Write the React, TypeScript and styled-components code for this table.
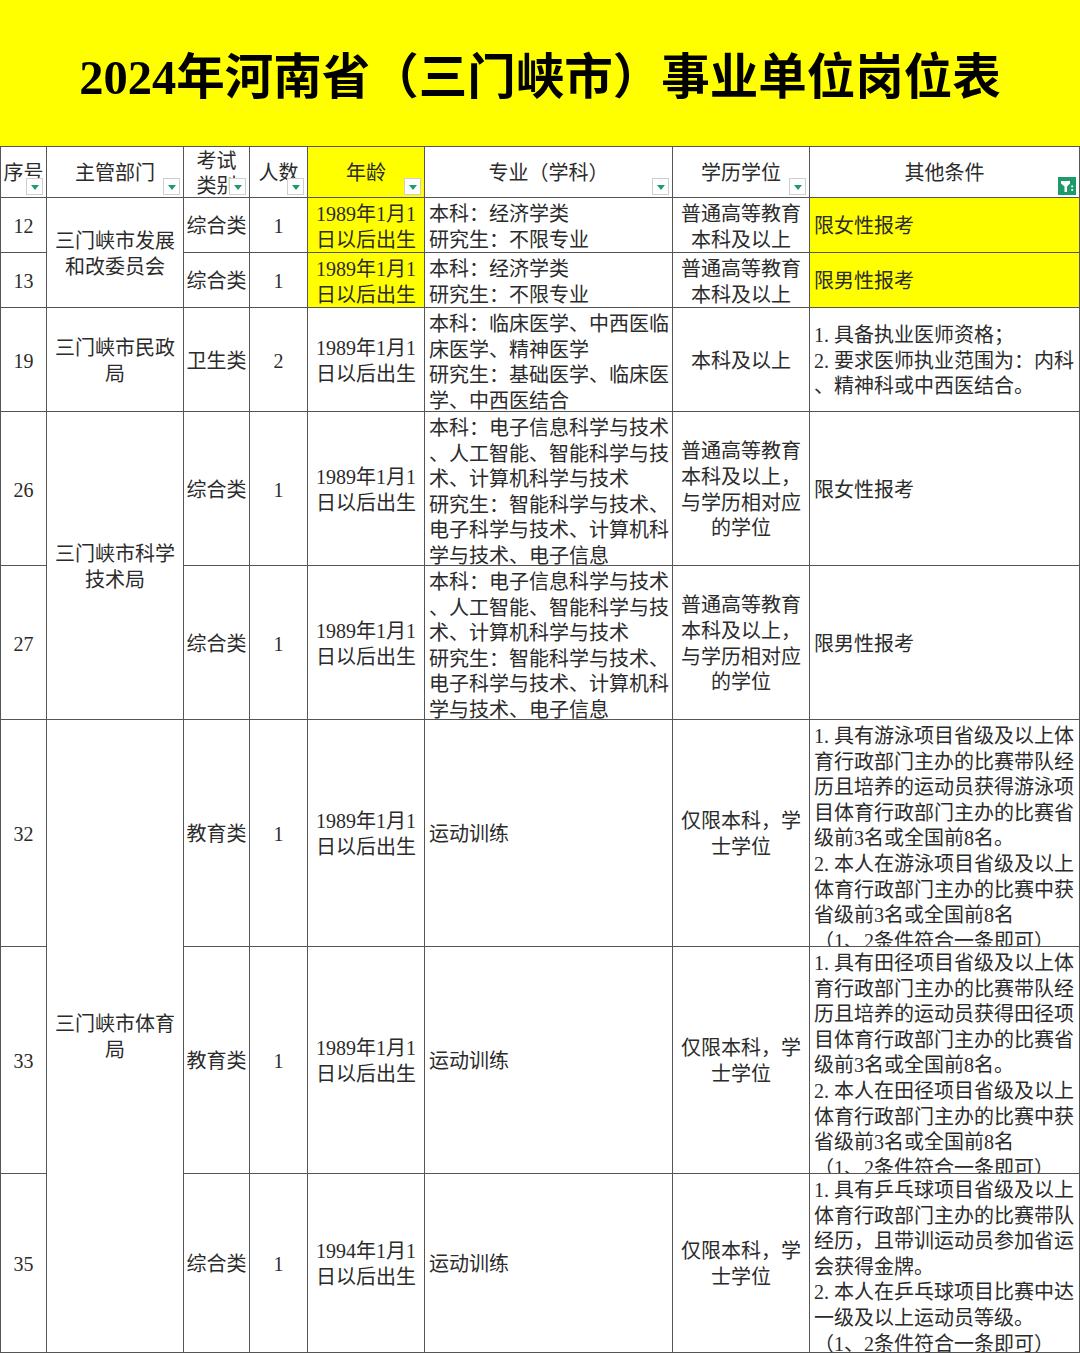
import React from "react";
import styled, { createGlobalStyle } from "styled-components";

const Global = createGlobalStyle`
  html, body { margin: 0; padding: 0; background: #fff; }
  body { width: 1080px; height: 1353px; overflow: hidden; }
  * { box-sizing: border-box; }
`;

const Page = styled.div`
  width: 1080px;
  height: 1353px;
  overflow: hidden;
  font-family: "Liberation Serif", "Noto Sans CJK SC", serif;
  color: #2b2b2b;
`;

const Banner = styled.header`
  height: 147px;
  background: #ffff00;
  border-bottom: 1px solid #555;
  display: flex;
  align-items: center;
  justify-content: center;
  padding-top: 10px;
`;

const Title = styled.h1`
  margin: 0;
  font-family: "Liberation Serif", "Noto Sans CJK SC", serif;
  font-weight: 700;
  font-size: 48.5px;
  line-height: 1;
  color: #000;
  white-space: nowrap;
`;

const Grid = styled.div`
  display: grid;
  grid-template-columns: 46px 137px 66px 58px 117px 248px 137px 270px;
  grid-template-rows: 51px 55px 55px 104px 154px 154px 227px 227px 179px;
  border-left: 1px solid #555;
  width: 1080px;
`;

const Cell = styled.div<{ $left?: boolean; $yellow?: boolean; $rs?: number }>`
  grid-row: span ${(p) => p.$rs || 1};
  position: relative;
  display: flex;
  flex-direction: column;
  justify-content: safe center;
  align-items: ${(p) => (p.$left ? "flex-start" : "center")};
  text-align: ${(p) => (p.$left ? "left" : "center")};
  padding: 4px ${(p) => (p.$left ? "4px" : "1px")} 0;
  border-right: 1px solid #555;
  border-bottom: 1px solid #555;
  background: ${(p) => (p.$yellow ? "#ffff00" : "#fff")};
  overflow: hidden;
  min-width: 0;
  min-height: 0;
  font-size: 20px;
  line-height: 25.6px;
`;

const HeadCell = styled(Cell)`
  padding-top: 2px;
  line-height: 25px;
`;

const Line = styled.span`
  display: block;
  white-space: pre;
  flex-shrink: 0;
`;

const FilterBtn = styled.span`
  position: absolute;
  right: 3px;
  bottom: 2px;
  width: 17px;
  height: 17px;
  background: #fff;
  border: 1px solid #cfcfcf;
  display: flex;
  align-items: center;
  justify-content: center;
  padding-top: 2px;
  &::after {
    content: "";
    width: 0;
    height: 0;
    border-left: 4px solid transparent;
    border-right: 4px solid transparent;
    border-top: 5px solid #1f9a6c;
  }
`;

const FilterActive = styled.span`
  position: absolute;
  right: 3px;
  bottom: 2px;
  width: 18px;
  height: 18px;
  background: #1e9b6b;
  display: flex;
`;

const FunnelIcon = () => (
  <svg width="18" height="18" viewBox="0 0 18 18">
    <polygon points="3,4 12,4 12,6.5 9,9.5 9,15 6.5,15 6.5,9.5 3,6.5" fill="#fff" />
    <rect x="13.3" y="8.5" width="1.8" height="1.8" fill="#fff" />
    <rect x="13.3" y="12" width="1.8" height="1.8" fill="#fff" />
  </svg>
);

type C = {
  t: string;
  left?: boolean;
  yellow?: boolean;
  rs?: number;
  filter?: "btn" | "active";
};

const lines = (s: string) => s.split("|");

const header: C[] = [
  { t: "序号", filter: "btn" },
  { t: "主管部门", filter: "btn" },
  { t: "考试|类别", filter: "btn" },
  { t: "人数", filter: "btn" },
  { t: "年龄", filter: "btn", yellow: true },
  { t: "专业（学科）", filter: "btn" },
  { t: "学历学位", filter: "btn" },
  { t: "其他条件", filter: "active" },
];

const age89 = "1989年1月1|日以后出生";
const econ = "本科：经济学类|研究生：不限专业";
const eduGen = "普通高等教育|本科及以上";
const techMajor =
  "本科：电子信息科学与技术|、人工智能、智能科学与技|术、计算机科学与技术|研究生：智能科学与技术、|电子科学与技术、计算机科|学与技术、电子信息";
const techEdu = "普通高等教育|本科及以上，|与学历相对应|的学位";
const sportEdu = "仅限本科，学|士学位";
const sportOther = (x: string) =>
  `1. 具有${x}项目省级及以上体|育行政部门主办的比赛带队经|历且培养的运动员获得${x}项|目体育行政部门主办的比赛省|级前3名或全国前8名。|2. 本人在${x}项目省级及以上|体育行政部门主办的比赛中获|省级前3名或全国前8名|（1、2条件符合一条即可）`;

const body: C[] = [
  // 12
  { t: "12" },
  { t: "三门峡市发展|和改委员会", rs: 2 },
  { t: "综合类" },
  { t: "1" },
  { t: age89, yellow: true },
  { t: econ, left: true },
  { t: eduGen },
  { t: "限女性报考", left: true, yellow: true },
  // 13
  { t: "13" },
  { t: "综合类" },
  { t: "1" },
  { t: age89, yellow: true },
  { t: econ, left: true },
  { t: eduGen },
  { t: "限男性报考", left: true, yellow: true },
  // 19
  { t: "19" },
  { t: "三门峡市民政|局" },
  { t: "卫生类" },
  { t: "2" },
  { t: age89 },
  {
    t: "本科：临床医学、中西医临|床医学、精神医学|研究生：基础医学、临床医|学、中西医结合",
    left: true,
  },
  { t: "本科及以上" },
  {
    t: "1. 具备执业医师资格；|2. 要求医师执业范围为：内科|、精神科或中西医结合。",
    left: true,
  },
  // 26
  { t: "26" },
  { t: "三门峡市科学|技术局", rs: 2 },
  { t: "综合类" },
  { t: "1" },
  { t: age89 },
  { t: techMajor, left: true },
  { t: techEdu },
  { t: "限女性报考", left: true },
  // 27
  { t: "27" },
  { t: "综合类" },
  { t: "1" },
  { t: age89 },
  { t: techMajor, left: true },
  { t: techEdu },
  { t: "限男性报考", left: true },
  // 32
  { t: "32" },
  { t: "三门峡市体育|局", rs: 3 },
  { t: "教育类" },
  { t: "1" },
  { t: age89 },
  { t: "运动训练", left: true },
  { t: sportEdu },
  { t: sportOther("游泳"), left: true },
  // 33
  { t: "33" },
  { t: "教育类" },
  { t: "1" },
  { t: age89 },
  { t: "运动训练", left: true },
  { t: sportEdu },
  { t: sportOther("田径"), left: true },
  // 35
  { t: "35" },
  { t: "综合类" },
  { t: "1" },
  { t: "1994年1月1|日以后出生" },
  { t: "运动训练", left: true },
  { t: sportEdu },
  {
    t: "1. 具有乒乓球项目省级及以上|体育行政部门主办的比赛带队|经历，且带训运动员参加省运|会获得金牌。|2. 本人在乒乓球项目比赛中达|一级及以上运动员等级。|（1、2条件符合一条即可）",
    left: true,
  },
];

const content = (c: C) =>
  lines(c.t).map((l, j) => <Line key={j}>{l}</Line>);

const renderHead = (c: C, i: number) => (
  <HeadCell key={i} $yellow={c.yellow}>
    {content(c)}
    {c.filter === "btn" && <FilterBtn />}
    {c.filter === "active" && (
      <FilterActive>
        <FunnelIcon />
      </FilterActive>
    )}
  </HeadCell>
);

const renderCell = (c: C, i: number) => (
  <Cell key={i} $left={c.left} $yellow={c.yellow} $rs={c.rs}>
    {content(c)}
  </Cell>
);

export default function App() {
  return (
    <Page>
      <Global />
      <Banner>
        <Title>2024年河南省（三门峡市）事业单位岗位表</Title>
      </Banner>
      <Grid>
        {header.map(renderHead)}
        {body.map(renderCell)}
      </Grid>
    </Page>
  );
}
